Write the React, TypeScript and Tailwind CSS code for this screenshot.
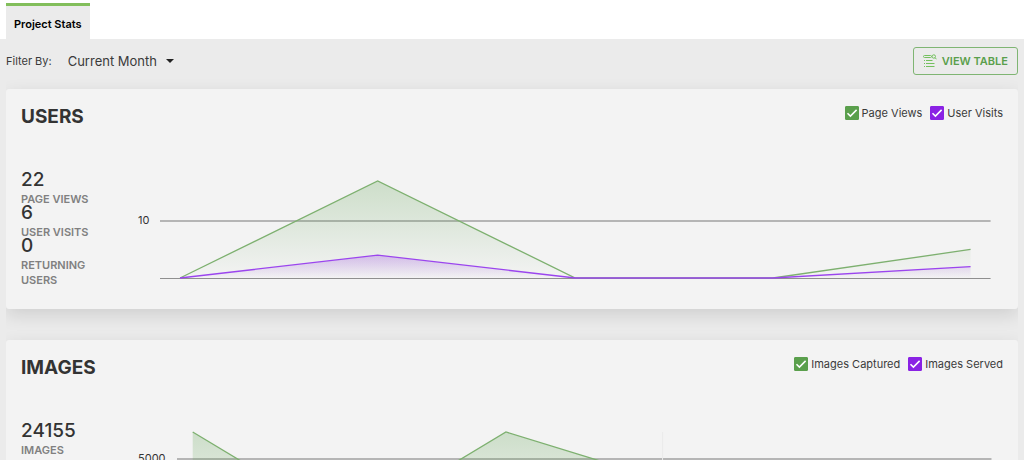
import {useId, useState} from 'react';

type Series = {
	name: string;
	color: 'green' | 'purple';
	values: number[];
};

type Stat = {
	value: string;
	label: string;
};

type ChartProps = {
	series: Series[];
	tick: number;
	max: number;
	inset: number;
	marker?: number;
};

const CHART_HEIGHT = 98;
const CHART_WIDTH = 830;

const strokes = {green: '#7db06f', purple: '#9b45ee'};
const fills = {green: '#5a9f4c', purple: '#8a22e4'};

const usersSeries: Series[] = [
	{name: 'Page Views', color: 'green', values: [0, 17, 0, 0, 5]},
	{name: 'User Visits', color: 'purple', values: [0, 4, 0, 0, 2]},
];

const imagesSeries: Series[] = [
	{name: 'Images Captured', color: 'green', values: [6950, 200, 6950, 3500, 3300, 3255]},
	{name: 'Images Served', color: 'purple', values: [0, 0, 0, 0, 0, 0]},
];

const usersStats: Stat[] = [
	{value: '22', label: 'PAGE VIEWS'},
	{value: '6', label: 'USER VISITS'},
	{value: '0', label: 'RETURNING USERS'},
];

const imagesStats: Stat[] = [{value: '24155', label: 'IMAGES'}];

function AreaChart({series, tick, max, inset, marker}: ChartProps) {
	const id = useId();
	const toX = (i: number, count: number) => inset + (i * (CHART_WIDTH - inset * 2)) / (count - 1);
	const toY = (v: number) => CHART_HEIGHT - 1 - (v / max) * (CHART_HEIGHT - 1);
	const tickY = Math.round(toY(tick));

	return (
		<div className="flex">
			<div className="shrink-0 pr-[11px] text-[11px] leading-4 text-[#333]">
				<div style={{paddingTop: tickY - 9}}>{tick}</div>
			</div>
			<svg
				viewBox={`0 0 ${CHART_WIDTH} ${CHART_HEIGHT}`}
				preserveAspectRatio="none"
				className="h-[98px] min-w-0 flex-1 overflow-visible"
				role="img"
				aria-label={series.map((s) => s.name).join(', ')}
			>
				<defs>
					{series.map((s) => (
						<linearGradient key={s.name} id={`${id}-${s.color}`} x1="0" y1="0" x2="0" y2="1">
							<stop offset="0" stopColor={fills[s.color]} stopOpacity="0.25" />
							<stop offset="1" stopColor={fills[s.color]} stopOpacity="0" />
						</linearGradient>
					))}
				</defs>
				<line x1="0" x2={CHART_WIDTH} y1={tickY} y2={tickY} stroke="#b5b5b5" strokeWidth="2" />
				<line x1="0" x2={CHART_WIDTH} y1="97.5" y2="97.5" stroke="#8f8f8f" strokeWidth="1" />
				{marker !== undefined && (
					<line
						x1={inset + (marker * (CHART_WIDTH - inset * 2)) / 5}
						x2={inset + (marker * (CHART_WIDTH - inset * 2)) / 5}
						y1="0"
						y2={CHART_HEIGHT}
						stroke="#eaeaea"
						strokeWidth="1"
					/>
				)}
				{series.map((s) => {
					const points = s.values.map((v, i) => `${toX(i, s.values.length)},${toY(v)}`).join(' ');
					const first = toX(0, s.values.length);
					const last = toX(s.values.length - 1, s.values.length);
					return (
						<g key={s.name}>
							<polygon
								points={`${first},${CHART_HEIGHT - 1} ${points} ${last},${CHART_HEIGHT - 1}`}
								fill={`url(#${id}-${s.color})`}
							/>
							<polyline
								points={points}
								fill="none"
								stroke={strokes[s.color]}
								strokeWidth="1.3"
								vectorEffect="non-scaling-stroke"
							/>
						</g>
					);
				})}
			</svg>
		</div>
	);
}

function SeriesToggle({series, checked, onChange}: {series: Series; checked: boolean; onChange: () => void}) {
	return (
		<label className="flex items-center gap-[3px] text-[11px] leading-4 text-[#3a3a3a]">
			<span className="relative size-[14px]">
				<input
					type="checkbox"
					checked={checked}
					onChange={onChange}
					className={
						series.color === 'green'
							? 'peer block size-[14px] appearance-none rounded-[1px] border border-[#5a9f4c] checked:bg-[#5a9f4c]'
							: 'peer block size-[14px] appearance-none rounded-[1px] border border-[#8a22e4] checked:bg-[#8a22e4]'
					}
				/>
				<svg
					viewBox="0 0 14 14"
					className="pointer-events-none absolute inset-0 hidden size-[14px] peer-checked:block"
					fill="none"
					stroke="white"
					strokeWidth="1.5"
				>
					<path d="M2.5 7.2 5.4 10.1 11.6 3.9" />
				</svg>
			</span>
			{series.name}
		</label>
	);
}

function StatsCard({title, stats, series, ...chart}: {title: string; stats: Stat[]} & ChartProps) {
	const [hidden, setHidden] = useState<string[]>([]);

	const toggle = (name: string) => {
		setHidden((prev) => (prev.includes(name) ? prev.filter((n) => n !== name) : [...prev, name]));
	};

	return (
		<section className="min-h-[220px] rounded-[3px] bg-[#f3f3f3] px-[15px] pt-4 shadow-[0_6px_18px_rgba(0,0,0,0.12)]">
			<div className="flex items-start justify-between">
				<h2 className="text-[19px] leading-6 font-bold text-[#333]">{title}</h2>
				<div className="flex gap-2">
					{series.map((s) => (
						<SeriesToggle
							key={s.name}
							series={s}
							checked={!hidden.includes(s.name)}
							onChange={() => toggle(s.name)}
						/>
					))}
				</div>
			</div>
			<div className="flex pt-[39px]">
				<dl className="w-[117px] shrink-0 pr-6">
					{stats.map((stat) => (
						<div key={stat.label} className="-mb-[6px] flex flex-col-reverse">
							<dt className="text-[11px] leading-[15px] font-semibold text-[#808080]">{stat.label}</dt>
							<dd className="text-[19px] leading-6 font-medium text-[#333]">{stat.value}</dd>
						</div>
					))}
				</dl>
				<div className="min-w-0 flex-1 pt-[13px] pr-3">
					<AreaChart series={series.filter((s) => !hidden.includes(s.name))} {...chart} />
				</div>
			</div>
		</section>
	);
}

function TableIcon() {
	return (
		<svg viewBox="0 0 14 14" className="size-[14px]" fill="none" stroke="#74c05e" strokeWidth="1">
			<rect x="0.5" y="1.5" width="8" height="2" rx="1" />
			<circle cx="10.8" cy="2.5" r="1.7" />
			<path d="M12 3.7 13.6 5.3M3 6.5H9.5M1 6.5h1M3 9.5H11.5M1 9.5h1M3 12.5H11.5M1 12.5h1" />
		</svg>
	);
}

export default function App() {
	const [period, setPeriod] = useState('Current Month');

	return (
		<div className="h-screen overflow-hidden bg-[#ebebeb] font-['Inter',sans-serif]">
			<nav className="flex bg-white px-[6px] pt-[3px]">
				<button
					type="button"
					className="h-9 border-t-[3px] border-[#82be5b] bg-[#ebebeb] px-2 pt-[2px] text-[11px] leading-4 font-semibold text-black"
				>
					Project Stats
				</button>
			</nav>
			<main className="overflow-x-clip">
				<div className="flex items-center justify-between px-[6px] pt-2">
					<div className="flex items-center text-[#3a3a3a]">
						<label htmlFor="period" className="pr-4 text-[11px] leading-4">
							Filter By:
						</label>
						<div className="relative">
							<select
								id="period"
								value={period}
								onChange={(e) => setPeriod(e.target.value)}
								className="block appearance-none bg-transparent pr-4 text-[13px] leading-5"
							>
								<option>Current Month</option>
							</select>
							<svg
								viewBox="0 0 8 4"
								className="pointer-events-none absolute top-2 right-0 h-1 w-2"
								fill="#222"
							>
								<path d="M0 0h8L4 4z" />
							</svg>
						</div>
					</div>
					<button
						type="button"
						className="flex h-7 items-center gap-[5px] rounded-[3px] border border-[#7fb573] px-[9px] text-[11px] leading-4 font-semibold text-[#5a9f4c]"
					>
						<TableIcon />
						VIEW TABLE
					</button>
				</div>
				<div className="mx-[6px] flex flex-col gap-[31px] overflow-x-clip pt-[14px] pb-8">
					<StatsCard
						title="USERS"
						stats={usersStats}
						series={usersSeries}
						tick={10}
						max={17}
						inset={20}
					/>
					<StatsCard
						title="IMAGES"
						stats={imagesStats}
						series={imagesSeries}
						tick={5000}
						max={6950}
						inset={16}
						marker={3}
					/>
				</div>
			</main>
		</div>
	);
}
